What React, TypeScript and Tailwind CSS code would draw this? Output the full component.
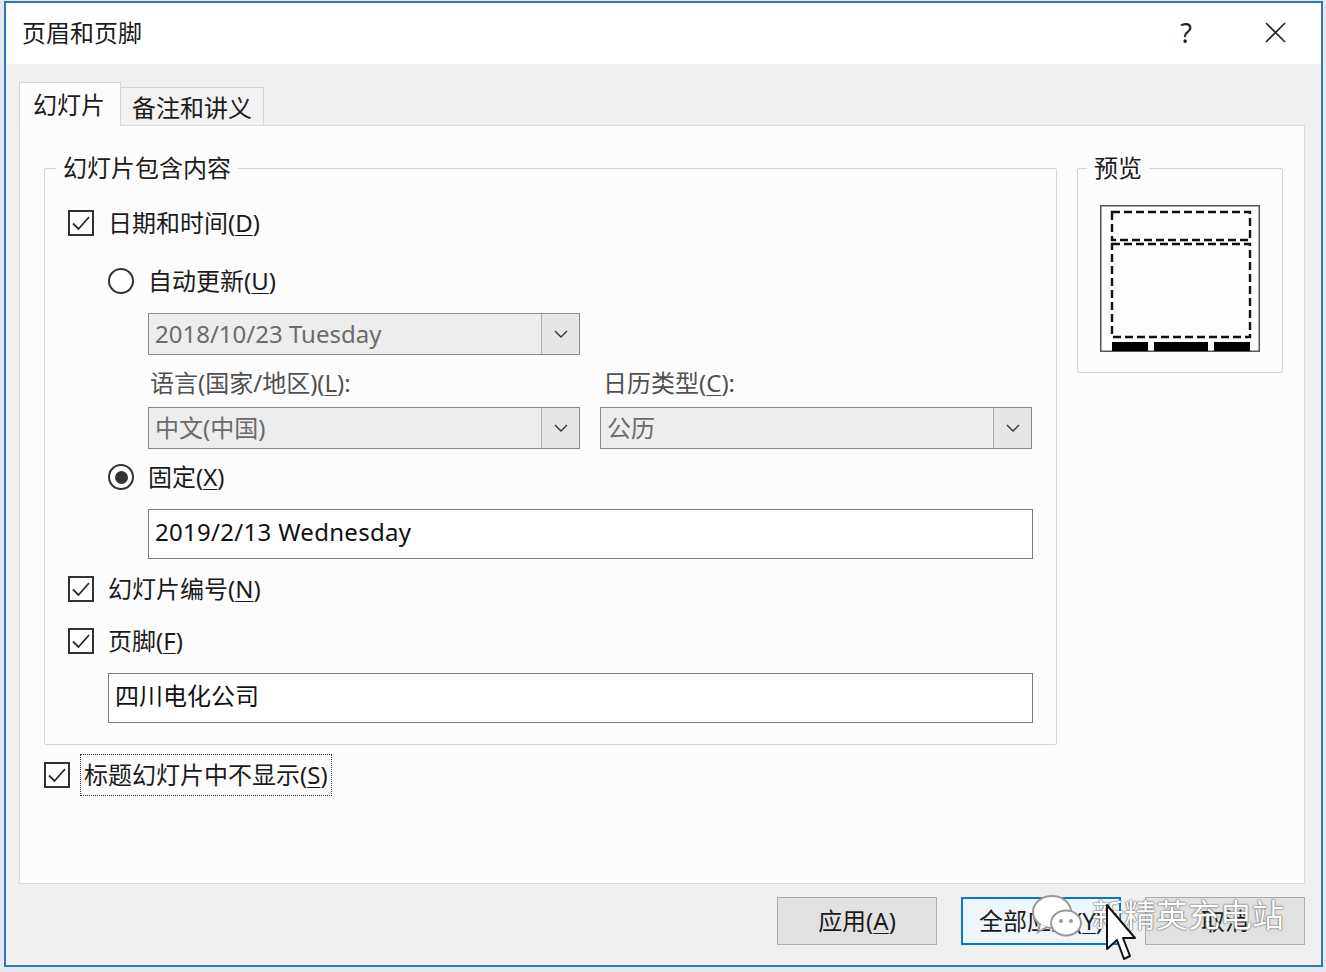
import type { ReactNode } from 'react';

function Mn({ children }: { children: ReactNode }) {
    return <span className="underline decoration-1 underline-offset-[3px]">{children}</span>;
}

function CheckBox() {
    return (
        <div className="flex h-[26px] w-[26px] shrink-0 items-center justify-center border-2 border-[#333] bg-white">
            <svg width="22" height="22" viewBox="0 0 22 22" fill="none">
                <path d="M3 11.5 L8.5 17 L19 5" stroke="#2a2a2a" strokeWidth="1.8" />
            </svg>
        </div>
    );
}

function Radio({ checked }: { checked?: boolean }) {
    return (
        <div className="flex h-[26px] w-[26px] shrink-0 items-center justify-center rounded-full border-2 border-[#333] bg-white">
            {checked ? <div className="h-[13px] w-[13px] rounded-full bg-[#333]" /> : null}
        </div>
    );
}

function Chevron() {
    return (
        <svg width="14" height="8" viewBox="0 0 14 8" fill="none">
            <path d="M1 1 L7 7 L13 1" stroke="#333" strokeWidth="1.4" />
        </svg>
    );
}

function Combo({ value, width }: { value: string; width: string }) {
    return (
        <div className={`flex h-[42px] ${width} border border-[#8a8a8a] bg-[#ededed]`}>
            <div className="flex flex-1 items-center pl-[6px] text-[#6b6b6b]">{value}</div>
            <div className="flex w-[38px] items-center justify-center border-l border-[#adadad] bg-[#e6e6e6]">
                <Chevron />
            </div>
        </div>
    );
}

function PreviewPicture() {
    return (
        <svg width="160" height="147" viewBox="0 0 160 147" fill="none">
            <rect x="0.75" y="0.75" width="158.5" height="145.5" fill="#fdfdfd" stroke="#555" strokeWidth="1.5" />
            <rect x="12" y="7" width="138" height="28" stroke="#111" strokeWidth="2.4" strokeDasharray="8 4" />
            <rect x="12" y="39" width="138" height="93" stroke="#111" strokeWidth="2.4" strokeDasharray="8 4" />
            <rect x="12" y="137" width="36" height="9" fill="#000" />
            <rect x="54" y="137" width="54" height="9" fill="#000" />
            <rect x="114" y="137" width="36" height="9" fill="#000" />
        </svg>
    );
}

export default function App() {
    return (
        <div className="h-[972px] w-[1326px] bg-[#e2e9f0] pl-[4px] pt-[1px] font-['Noto_Sans','Noto_Sans_CJK_SC',sans-serif] text-[24px] text-[#1b1b1b]">
            <div className="relative flex h-[966px] w-[1319px] flex-col border-2 border-[#3177b7] bg-[#f0f0f0]">
                {/* title bar */}
                <div className="flex h-[61px] shrink-0 items-center bg-white pb-[2px] pl-[16px] pr-[35px]">
                    <span className="leading-none">页眉和页脚</span>
                    <div className="ml-auto flex items-center gap-[73px]">
                        <span className="text-[27px] leading-none text-[#222]">?</span>
                        <svg width="21" height="21" viewBox="0 0 21 21" fill="none">
                            <path d="M1 1 L20 20 M20 1 L1 20" stroke="#222" strokeWidth="1.6" />
                        </svg>
                    </div>
                </div>

                {/* body */}
                <div className="flex flex-1 flex-col pl-[13px] pr-[16px] pt-[18px]">
                    {/* tabs */}
                    <div className="relative z-10 -mb-px flex h-[44px] items-end">
                        <div className="flex h-[44px] w-[102px] items-center border border-b-0 border-[#d5d5d5] bg-[#fcfcfc] pl-[13px]">
                            幻灯片
                        </div>
                        <div className="mb-px flex h-[38px] w-[143px] items-center border border-b-0 border-l-0 border-[#d5d5d5] bg-[#f2f2f2] pl-[11px] pt-[2px]">
                            备注和讲义
                        </div>
                    </div>

                    {/* panel */}
                    <div className="flex h-[759px] gap-[20px] border border-[#d9d9d9] bg-[#fcfcfc] pl-[24px] pt-[26px]">
                        <div className="flex w-[1013px] flex-col">
                            <fieldset className="rounded-[2px] border border-[#d5d5d5] pb-[21px] pl-[23px]">
                                <legend className="-ml-[12px] px-[7px] leading-[32px]">幻灯片包含内容</legend>

                                <div className="mt-[23px] flex h-[32px] items-center gap-[14px]">
                                    <CheckBox />
                                    <span>
                                        日期和时间(<Mn>D</Mn>)
                                    </span>
                                </div>

                                <div className="ml-[40px] mt-[26px] flex h-[32px] items-center gap-[14px]">
                                    <Radio />
                                    <span>
                                        自动更新(<Mn>U</Mn>)
                                    </span>
                                </div>

                                <div className="ml-[80px] mt-[16px]">
                                    <Combo value="2018/10/23 Tuesday" width="w-[432px]" />
                                </div>

                                <div className="ml-[80px] mt-[10px] grid h-[32px] grid-cols-[432px_432px] items-center gap-x-[20px] text-[#505050]">
                                    <span className="pl-[2px]">
                                        语言(国家/地区)(<Mn>L</Mn>):
                                    </span>
                                    <span className="pl-[3px]">
                                        日历类型(<Mn>C</Mn>):
                                    </span>
                                </div>

                                <div className="ml-[80px] mt-[10px] flex gap-[20px]">
                                    <Combo value="中文(中国)" width="w-[432px]" />
                                    <Combo value="公历" width="w-[432px]" />
                                </div>

                                <div className="ml-[40px] mt-[12px] flex h-[32px] items-center gap-[14px]">
                                    <Radio checked />
                                    <span>
                                        固定(<Mn>X</Mn>)
                                    </span>
                                </div>

                                <div className="ml-[80px] mt-[16px] flex h-[50px] w-[885px] items-center border border-[#7a7a7a] bg-white pl-[6px] pb-[4px] text-[#111] tracking-[0.3px]">
                                    2019/2/13 Wednesday
                                </div>

                                <div className="mt-[14px] flex h-[32px] items-center gap-[14px]">
                                    <CheckBox />
                                    <span>
                                        幻灯片编号(<Mn>N</Mn>)
                                    </span>
                                </div>

                                <div className="mt-[20px] flex h-[32px] items-center gap-[14px]">
                                    <CheckBox />
                                    <span>
                                        页脚(<Mn>F</Mn>)
                                    </span>
                                </div>

                                <div className="ml-[40px] mt-[16px] flex h-[50px] w-[925px] items-center border border-[#7a7a7a] bg-white pl-[6px] pb-[4px] text-[#111]">
                                    四川电化公司
                                </div>
                            </fieldset>

                            <div className="mt-[9px] flex h-[42px] items-center gap-[10px]">
                                <CheckBox />
                                <div className="flex h-[42px] items-center border border-dotted border-[#333] px-[3px]">
                                    标题幻灯片中不显示(<Mn>S</Mn>)
                                </div>
                            </div>
                        </div>

                        <fieldset className="h-[221px] w-[206px] rounded-[2px] border border-[#d5d5d5] pl-[22px]">
                            <legend className="-ml-[13px] px-[7px] leading-[32px]">预览</legend>
                            <div className="mt-[21px]">
                                <PreviewPicture />
                            </div>
                        </fieldset>
                    </div>

                    {/* buttons */}
                    <div className="mt-[13px] flex justify-end gap-[24px]">
                        <div className="flex h-[48px] w-[160px] items-center justify-center border border-[#adadad] bg-[#e1e1e1]">
                            应用(<Mn>A</Mn>)
                        </div>
                        <div className="flex h-[48px] w-[160px] items-center justify-center border-2 border-[#0078d7] bg-[#eef5fb]">
                            全部应用(<Mn>Y</Mn>)
                        </div>
                        <div className="flex h-[48px] w-[160px] items-center justify-center border border-[#adadad] bg-[#e1e1e1]">
                            取消
                        </div>
                    </div>
                </div>

                {/* watermark overlay */}
                <svg className="absolute left-[1024px] top-[889px]" width="56" height="52" viewBox="0 0 56 52" fill="none">
                    <ellipse cx="22" cy="20" rx="19" ry="16" fill="#fff" stroke="#9a9a9a" strokeWidth="2" />
                    <path d="M10 32 L8 40 L17 35" fill="#fff" stroke="#9a9a9a" strokeWidth="2" />
                    <ellipse cx="36" cy="31" rx="15" ry="12.5" fill="#fff" stroke="#9a9a9a" strokeWidth="2" />
                    <circle cx="31" cy="29" r="2" fill="#9a9a9a" />
                    <circle cx="41" cy="29" r="2" fill="#9a9a9a" />
                </svg>
                <div className="absolute left-[1086px] top-[890px] text-[32px] leading-[44px] text-white [text-shadow:0_0_1px_#444,0_0_2px_#666]">
                    新精英充电站
                </div>
                <svg className="absolute left-[1099px] top-[900px]" width="32" height="62" viewBox="0 0 32 62" fill="none">
                    <path d="M2 2 L2 46 L12 37 L19 56 L25 53 L18 35 L30 35 Z" fill="#fff" stroke="#111" strokeWidth="2" strokeLinejoin="round" />
                </svg>
            </div>
        </div>
    );
}
